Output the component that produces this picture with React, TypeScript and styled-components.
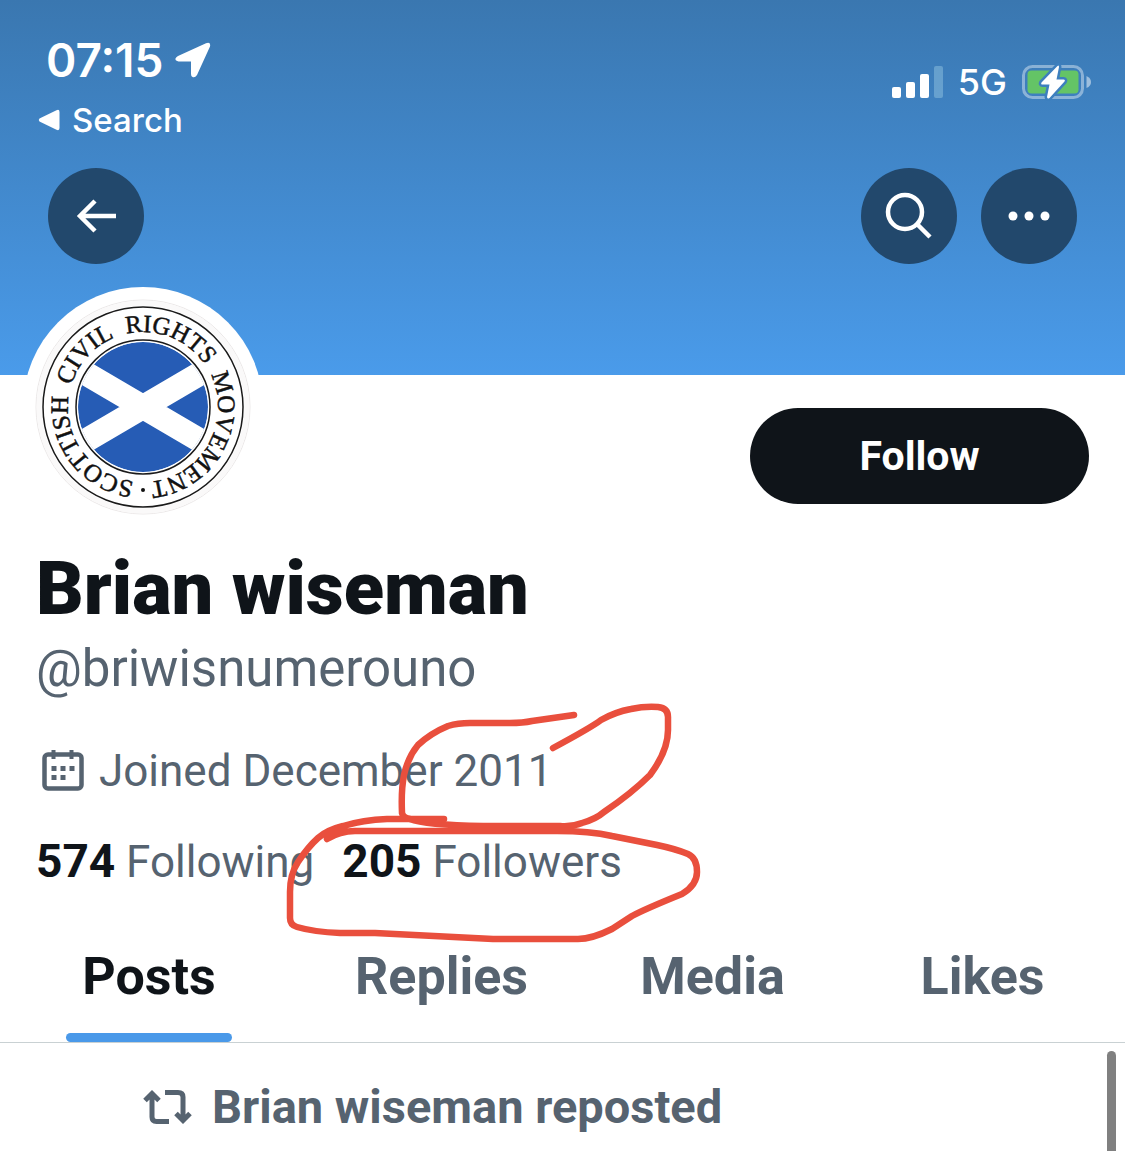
import React from 'react';
import styled, { createGlobalStyle } from 'styled-components';

const colors = {
  ink: '#0f1419',
  muted: '#566370',
  blue: '#4a99e9',
  line: '#c9d1d3',
  marker: '#e94f3d',
};

const GlobalStyle = createGlobalStyle`
  *, *::before, *::after { box-sizing: border-box; }
  body { margin: 0; background: #fff; }
  h1, p { margin: 0; }
  button { border: 0; padding: 0; font: inherit; cursor: pointer; }
  a { color: inherit; text-decoration: none; }
  svg { display: block; flex: none; }
`;

const Page = styled.div`
  position: relative;
  display: flex;
  flex-direction: column;
  min-height: 100vh;
  overflow: hidden;
  color: ${colors.ink};
  font-family: Roboto, 'Liberation Sans', sans-serif;
`;

const Banner = styled.header`
  display: flex;
  flex-direction: column;
  gap: 28px;
  padding: 32px 0 111px;
  color: #fff;
  background: linear-gradient(#3a77b0, #4a9bea);
`;

const StatusBar = styled.div`
  display: flex;
  justify-content: space-between;
  align-items: flex-start;
  padding: 0 34px 0 38px;
  font-family: Inter, 'Liberation Sans', sans-serif;
`;

const StatusStart = styled.div`
  display: flex;
  flex-direction: column;
  gap: 12px;
`;

const Clock = styled.div`
  display: flex;
  align-items: center;
  gap: 12px;
  padding-left: 8px;
  font-size: 46px;
  font-weight: 600;
  line-height: 56px;
`;

const BackToApp = styled.a`
  display: flex;
  align-items: center;
  gap: 12px;
  font-size: 33px;
  font-weight: 500;
  line-height: 40px;
`;

const StatusEnd = styled.div`
  display: flex;
  align-items: center;
  gap: 15px;
  padding-top: 26px;
  font-size: 36px;
  font-weight: 500;
  line-height: 48px;
`;

const Toolbar = styled.nav`
  display: flex;
  gap: 24px;
  padding: 0 48px;
`;

const RoundButton = styled.button<{ $pushEnd?: boolean }>`
  display: grid;
  place-items: center;
  width: 96px;
  height: 96px;
  margin-right: ${(p) => (p.$pushEnd ? 'auto' : '0')};
  border-radius: 50%;
  color: #fff;
  background: #22486c;
`;

const Profile = styled.section`
  padding: 0 36px;
`;

const ProfileTop = styled.div`
  display: flex;
  justify-content: space-between;
  align-items: flex-start;
  margin-bottom: 22px;
`;

const AvatarFrame = styled.div`
  margin: -88px 0 0 -12px;
`;

const FollowButton = styled.button`
  width: 339px;
  height: 96px;
  margin-top: 33px;
  border-radius: 48px;
  color: #fff;
  background: ${colors.ink};
  font-size: 41px;
  font-weight: 700;
`;

const Name = styled.h1`
  font-size: 74px;
  font-weight: 900;
  line-height: 80px;
`;

const Handle = styled.p`
  margin-top: 8px;
  color: ${colors.muted};
  font-size: 51px;
  line-height: 64px;
`;

const Joined = styled.p`
  display: flex;
  align-items: center;
  gap: 15px;
  margin-top: 42px;
  padding-left: 6px;
  color: ${colors.muted};
  font-size: 44px;
  line-height: 56px;
`;

const Stats = styled.div`
  display: flex;
  gap: 28px;
  margin-top: 35px;
  font-size: 44px;
  line-height: 56px;
`;

const Stat = styled.a`
  color: ${colors.muted};

  strong {
    color: ${colors.ink};
    font-size: 46px;
    font-weight: 700;
    line-height: 48px;
  }
`;

const Tabs = styled.div`
  display: grid;
  grid-template-columns: 298fr 287fr 255fr 285fr;
  justify-items: center;
  margin-top: 20px;
  border-bottom: 1px solid ${colors.line};
`;

const Tab = styled.button<{ $active?: boolean }>`
  padding: 37px 16px 0;
  color: ${(p) => (p.$active ? colors.ink : colors.muted)};
  background: none;
  font-size: 52px;
  font-weight: 700;
  line-height: 60px;

  &::after {
    content: '';
    display: block;
    height: 9px;
    margin: 26px -16px 0;
    border-radius: 5px;
    background: ${(p) => (p.$active ? colors.blue : 'transparent')};
  }
`;

const Feed = styled.main`
  position: relative;
  flex: 1;
  padding: 36px 36px 16px 143px;
`;

const RepostNote = styled.p`
  display: flex;
  align-items: center;
  gap: 20px;
  color: ${colors.muted};
  font-size: 47px;
  font-weight: 700;
  line-height: 56px;
`;

const ScrollThumb = styled.div`
  position: absolute;
  top: 8px;
  right: 9px;
  bottom: 0;
  width: 9px;
  border-radius: 5px 5px 0 0;
  background: #808080;
`;

const Marker = styled.svg`
  position: absolute;
  top: 695px;
  left: 280px;
  pointer-events: none;
`;

const LocationIcon = () => (
  <svg width="36" height="36" viewBox="0 0 36 36" fill="currentColor" aria-hidden="true">
    <path d="M31 1.200 Q36 -.5 35 4.500 L22 33 Q20 36 17.500 35 Q16 34.500 16 32 L16 19.500 L3.500 19.500 Q0 19 .5 16.500 Q1 15 3 14 Z" />
  </svg>
);

const BackTriangle = () => (
  <svg width="22" height="22" viewBox="0 0 22 22" fill="currentColor" aria-hidden="true">
    <path d="M1.500 9.500 L18.500 1.200 Q21.500 0 21.500 3 L21.500 19 Q21.500 22 18.500 20.800 L1.500 12.500 Q0 11 1.500 9.500 Z" />
  </svg>
);

const SignalIcon = () => (
  <svg width="51" height="34" viewBox="0 0 51 34" fill="currentColor" aria-label="Signal" role="img">
    <rect x="0" y="22" width="9" height="11" rx="2" />
    <rect x="14" y="17" width="9" height="16" rx="2" />
    <rect x="28" y="9" width="9" height="24" rx="2" />
    <rect x="42" y="1" width="9" height="32" rx="2" fill="#8fc1df" opacity=".5" />
  </svg>
);

const BatteryIcon = () => (
  <svg width="69" height="38" viewBox="0 0 69 38" aria-label="Battery charging" role="img">
    <rect x="1.500" y="3.500" width="59" height="31" rx="9" fill="none" stroke="#fff" strokeOpacity=".4" strokeWidth="3" />
    <path d="M64.500 13 Q69 15 69 19 Q69 23 64.500 25 Z" fill="#fff" opacity=".5" />
    <rect x="5.500" y="7.500" width="51" height="23" rx="4" fill="#64c466" />
    <path
      d="M35.500 3 L19.500 19.500 Q18.500 21.500 20.500 21.500 L27.500 21.500 L25 34 Q25.500 36.500 27.500 35 L42.500 18.500 Q43.500 16.500 41.500 16.500 L34.500 16.500 L37 4 Q37 1.500 35.500 3 Z"
      fill="#fff"
      stroke="#3d7fbe"
      strokeWidth="5"
      paintOrder="stroke"
    />
  </svg>
);

const ArrowIcon = () => (
  <svg width="42" height="36" viewBox="0 0 42 36" fill="none" stroke="currentColor" strokeWidth="4.500" aria-hidden="true">
    <path d="M20 3 L5 18 L20 33 M5 18 H41" />
  </svg>
);

const SearchIcon = () => (
  <svg width="48" height="48" viewBox="0 0 48 48" fill="none" stroke="currentColor" strokeWidth="4.500" aria-hidden="true">
    <circle cx="20" cy="20" r="17" />
    <path d="M32 32 L45 45" />
  </svg>
);

const MoreIcon = () => (
  <svg width="42" height="10" viewBox="0 0 42 10" fill="currentColor" aria-hidden="true">
    <circle cx="5" cy="5" r="4.500" />
    <circle cx="21" cy="5" r="4.500" />
    <circle cx="37" cy="5" r="4.500" />
  </svg>
);

const CalendarIcon = () => (
  <svg width="42" height="42" viewBox="0 0 42 42" aria-hidden="true">
    <rect x="2.500" y="4.500" width="37" height="34" rx="3.500" fill="none" stroke="currentColor" strokeWidth="4.500" />
    <path
      d="M9.500 0 h4 v9 h-4 z M27.500 0 h4 v9 h-4 z M9.500 16 h5 v5 h-5 z M18.500 16 h5 v5 h-5 z M27.500 16 h5 v5 h-5 z M9.500 25 h5 v5 h-5 z M18.500 25 h5 v5 h-5 z"
      fill="currentColor"
    />
  </svg>
);

const RepostIcon = () => (
  <svg width="49" height="37" viewBox="0 0 49 37" fill="none" stroke="currentColor" strokeWidth="5" aria-hidden="true">
    <path d="M2 11.500 L9 4.500 L16 11.500 M9 5 V28 Q9 32.500 13.500 32.500 H26" />
    <path d="M22 3.500 H35 Q40 3.500 40 8 V31 M33 24.500 L40 31.500 L47 24.500" />
  </svg>
);

const ringWords = [
  { text: 'SCOTTISH', at: '14.6%' },
  { text: 'CIVIL', at: '36.7%' },
  { text: 'RIGHTS', at: '56%' },
  { text: 'MOVEMENT', at: '83.2%' },
];

const AvatarBadge = () => (
  <svg width="240" height="240" viewBox="-119 -120 240 240" role="img" aria-label="Brian wiseman">
    <defs>
      <clipPath id="flag">
        <circle r="65" />
      </clipPath>
      <path id="ring" d="M0 75 A75 75 0 0 1 0 -75 A75 75 0 0 1 0 75" />
    </defs>
    <circle r="120" fill="#fff" />
    <circle r="107" fill="#fff" stroke="#ebe8e8" strokeWidth="1" />
    <circle r="104" fill="none" stroke="#faf9f9" strokeWidth="5" />
    <circle r="100" fill="#fff" stroke="#1a1a1a" strokeWidth="1.500" />
    <circle r="67" fill="#fff" stroke="#1a1a1a" strokeWidth="1.500" />
    <g clipPath="url(#flag)">
      <circle r="65" fill="#265cb5" />
      <path d="M-80 -47 L80 47 M-80 47 L80 -47" stroke="#fff" strokeWidth="24" />
    </g>
    <g fill="#111" stroke="#111" strokeWidth=".5" fontFamily="'Liberation Serif', serif" fontSize="25" textAnchor="middle">
      {ringWords.map((word) => (
        <text key={word.text}>
          <textPath href="#ring" startOffset={word.at}>
            {word.text}
          </textPath>
        </text>
      ))}
    </g>
    <circle cy="83" r="2" fill="#111" />
  </svg>
);

const MarkerCircles = () => (
  <Marker
    width="430"
    height="255"
    viewBox="280 695 430 255"
    fill="none"
    stroke={colors.marker}
    strokeWidth="6.500"
    strokeLinecap="round"
    strokeLinejoin="round"
    aria-hidden="true"
  >
    <path d="M574 715 L532 721 Q523 723 510 723 H470 Q458 723 448 726 Q431 733 418 745 Q408 757 404 775 Q401 790 402 813 Q403 818 410 819 Q425 825 483 826 H560 Q572 827 582 823 Q596 819 604 812 Q632 793 650 775 Q668 751 668 730 V717 Q668 708 658 707 Q645 706 631 709 Q615 712 601 720 Q592 727 553 748" />
    <path d="M444 819 H387 Q363 820 343 826 Q327 830 318 838 Q308 847 298 862 Q290 874 290 892 V918 Q290 925 297 927 Q314 932 340 933 H375 L493 939 H578 Q592 939 612 929 L632 916 Q645 909 682 894 Q697 885 697 872 Q697 858 688 854 Q676 849 657 845 L612 836 Q590 831 557 831 H355 Q340 831 327 839" />
  </Marker>
);

export default function App() {
  return (
    <Page>
      <GlobalStyle />
      <Banner>
        <StatusBar>
          <StatusStart>
            <Clock>
              07:15
              <LocationIcon />
            </Clock>
            <BackToApp href="#search">
              <BackTriangle />
              Search
            </BackToApp>
          </StatusStart>
          <StatusEnd>
            <SignalIcon />
            5G
            <BatteryIcon />
          </StatusEnd>
        </StatusBar>
        <Toolbar>
          <RoundButton $pushEnd aria-label="Back">
            <ArrowIcon />
          </RoundButton>
          <RoundButton aria-label="Search">
            <SearchIcon />
          </RoundButton>
          <RoundButton aria-label="More">
            <MoreIcon />
          </RoundButton>
        </Toolbar>
      </Banner>

      <Profile>
        <ProfileTop>
          <AvatarFrame>
            <AvatarBadge />
          </AvatarFrame>
          <FollowButton>Follow</FollowButton>
        </ProfileTop>
        <Name>Brian wiseman</Name>
        <Handle>@briwisnumerouno</Handle>
        <Joined>
          <CalendarIcon />
          Joined December 2011
        </Joined>
        <Stats>
          <Stat href="#following">
            <strong>574</strong> Following
          </Stat>
          <Stat href="#followers">
            <strong>205</strong> Followers
          </Stat>
        </Stats>
      </Profile>

      <Tabs role="tablist">
        <Tab role="tab" aria-selected="true" $active>
          Posts
        </Tab>
        <Tab role="tab">Replies</Tab>
        <Tab role="tab">Media</Tab>
        <Tab role="tab">Likes</Tab>
      </Tabs>

      <Feed>
        <RepostNote>
          <RepostIcon />
          Brian wiseman reposted
        </RepostNote>
        <ScrollThumb />
      </Feed>

      <MarkerCircles />
    </Page>
  );
}
